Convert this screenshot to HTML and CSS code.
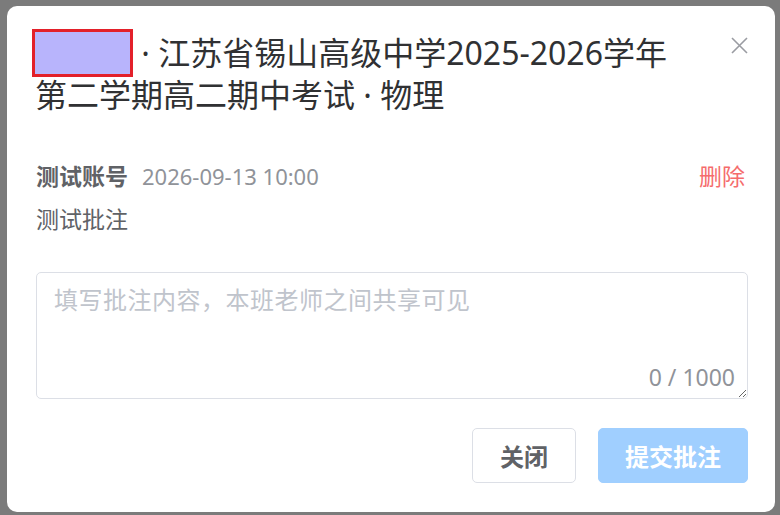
FILE: index.html
```html
<!DOCTYPE html>
<html lang="zh-CN">
<head>
    <meta charset="UTF-8">
    <meta name="viewport" content="width=device-width, initial-scale=1.0">
    <title>批注</title>
    <link rel="stylesheet" href="styles.css">
</head>
<body>

    <div class="dialog">
        <div class="dialog-header">
            <div class="dialog-title">
                <span class="name-mask"></span> · 江苏省锡山高级中学2025-2026学年第二学期高二期中考试 · 物理
            </div>
            <button class="close-btn" aria-label="关闭">
                <svg width="17" height="17" viewBox="0 0 17 17">
                    <path d="M1 1 L16 16 M16 1 L1 16" stroke="#9a9ca2" stroke-width="1.6" fill="none"/>
                </svg>
            </button>
        </div>

        <div class="dialog-body">
            <div class="comment">
                <div class="comment-meta">
                    <span class="author">测试账号</span>
                    <span class="time">2026-09-13 10:00</span>
                    <span class="delete">删除</span>
                </div>
                <div class="comment-text">测试批注</div>
            </div>

            <div class="input-wrap">
                <textarea placeholder="填写批注内容，本班老师之间共享可见"></textarea>
                <span class="counter">0 / 1000</span>
            </div>
        </div>

        <div class="dialog-footer">
            <button class="btn">关闭</button>
            <button class="btn btn-primary" disabled>提交批注</button>
        </div>
    </div>

</body>
</html>
```

FILE: styles.css
```css
body {
    margin: 0;
    font-family: "Noto Sans", "Noto Sans CJK SC", sans-serif;
    background-color: #7b7b7b;
    height: 515px;
    overflow: hidden;
}
.dialog {
    width: 768px;
    height: 506px;
    margin: 6px 0 0 7px;
    background-color: #fff;
    border-radius: 10px;
    box-sizing: border-box;
    padding: 26px 27px 0 28px;
}
.dialog-header {
    display: flex;
    align-items: flex-start;
}
.dialog-title {
    flex: 1;
    font-size: 32px;
    line-height: 42px;
    color: #303133;
    padding-right: 40px;
}
.name-mask {
    display: inline-block;
    width: 95px;
    height: 42px;
    margin: -3px 0 -3px -3px;
    vertical-align: top;
    background-color: #b8b4fc;
    border: 3px solid #e3202a;
}
.close-btn {
    border: none;
    background: none;
    padding: 0;
    margin-top: 5px;
    cursor: pointer;
}
.dialog-body {
    padding-top: 45px;
    padding-left: 1px;
}
.comment-meta {
    display: flex;
    align-items: center;
    font-size: 23px;
    line-height: 30px;
}
.author {
    font-weight: bold;
    color: #606266;
}
.time {
    font-size: 22px;
    color: #909399;
    margin-left: 14px;
}
.delete {
    margin-left: auto;
    margin-right: 3px;
    color: #f56c6c;
    cursor: pointer;
}
.comment-text {
    font-size: 23px;
    line-height: 30px;
    color: #606266;
    margin-top: 13px;
}
.input-wrap {
    position: relative;
    margin-top: 38px;
}
textarea {
    display: block;
    width: 712px;
    height: 127px;
    box-sizing: border-box;
    border: 1px solid #dcdfe6;
    border-radius: 5px;
    padding: 10px 17px 8px;
    font-family: inherit;
    font-size: 24px;
    letter-spacing: 0.5px;
    line-height: 34px;
    color: #606266;
}
textarea::placeholder {
    color: #c0c4cc;
}
.counter {
    position: absolute;
    right: 13px;
    bottom: 6px;
    font-size: 23px;
    color: #909399;
}
.dialog-footer {
    display: flex;
    justify-content: flex-end;
    gap: 22px;
    padding-top: 29px;
    padding-left: 1px;
    width: 712px;
}
.btn {
    height: 55px;
    padding: 0 27px;
    border: 1px solid #dcdfe6;
    border-radius: 5px;
    background-color: #fff;
    color: #606266;
    font-family: inherit;
    font-size: 24px;
    font-weight: bold;
    cursor: pointer;
}
.btn-primary {
    padding: 0 26px;
    border-color: #a0cfff;
    background-color: #a0cfff;
    color: #fff;
    cursor: not-allowed;
}
```
